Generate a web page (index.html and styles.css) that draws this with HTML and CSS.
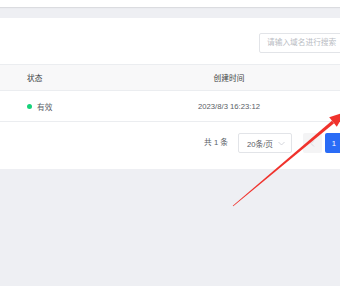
FILE: index.html
```html
<!DOCTYPE html>
<html lang="zh">
<head>
<meta charset="utf-8">
<link rel="stylesheet" href="styles.css">
</head>
<body>
<div class="topbar"></div>
<main class="main">
  <section class="card">
    <div class="toolbar">
      <div class="search">请输入域名进行搜索</div>
    </div>
    <div class="row head">
      <div class="cell status">状态</div>
      <div class="cell time">创建时间</div>
      <div class="cell rest"></div>
    </div>
    <div class="row body">
      <div class="cell status"><span class="dot"></span>有效</div>
      <div class="cell time">2023/8/3 16:23:12</div>
      <div class="cell rest"></div>
    </div>
    <div class="pager">
      <span class="total">共 1 条</span>
      <div class="size">20条/页<svg class="chev" width="7" height="5" viewBox="0 0 7 5"><path d="M0.5 1 L3.5 4 L6.5 1" fill="none" stroke="#c9ccd3" stroke-width="0.8"/></svg></div>
      <div class="btn prev"><svg width="5" height="7" viewBox="0 0 5 7"><path d="M4 0.5 L1 3.5 L4 6.5" fill="none" stroke="#d3d5da" stroke-width="0.8"/></svg></div>
      <div class="btn page">1</div>
      <div class="btn next"></div>
    </div>
  </section>
</main>
<svg class="arrow" width="340" height="286" viewBox="0 0 340 286">
  <polygon points="233.25,206.31 334.1,123.36 331.9,120.64 232.75,205.69" fill="#f0322c"/>
  <polygon points="329.2,117.3 345.5,112 336.8,126.7" fill="#f0322c"/>
</svg>
</body>
</html>
```
FILE: styles.css
```css
html, body {
  margin: 0;
  padding: 0;
  overflow: hidden;
}
body {
  width: 340px;
  height: 286px;
  background: #eeeff3;
  font-family: "Liberation Sans", "Noto Sans CJK SC", sans-serif;
  font-size: 7.7px;
  position: relative;
}
.topbar {
  height: 7px;
  background: #fff;
  box-shadow: 0 1px 1px rgba(0,0,0,0.08);
  position: relative;
}
.main {
  padding-top: 11px;
  width: 380px;
}
.card {
  background: #fff;
  width: 380px;
}
.toolbar {
  height: 46px;
  box-sizing: border-box;
  padding: 15px 15px 0 0;
  display: flex;
  justify-content: flex-end;
}
.search {
  width: 106px;
  height: 20px;
  box-sizing: border-box;
  border: 1px solid #e2e4e8;
  border-radius: 2px;
  color: #b9bcc3;
  padding-left: 7px;
  line-height: 18px;
}
.row {
  display: flex;
  border-top: 1px solid #ebedf0;
  box-sizing: border-box;
  align-items: center;
}
.row.head {
  height: 26px;
  background: #f8f8f9;
  color: #3b3e44;
}
.row.body {
  height: 32px;
  border-bottom: 1px solid #ebedf0;
  color: #5a5e66;
}
.cell.status {
  width: 160px;
  padding-left: 27px;
  box-sizing: border-box;
  display: flex;
  align-items: center;
}
.cell.time {
  width: 138px;
  text-align: center;
}
.cell.rest {
  flex: 1;
}
.dot {
  width: 5px;
  height: 5px;
  border-radius: 50%;
  background: #17d27a;
  margin-right: 5px;
}
.pager {
  height: 47px;
  box-sizing: border-box;
  padding: 11px 15px 0 0;
  display: flex;
  justify-content: flex-end;
  align-items: flex-start;
  color: #5a5e66;
}
.total {
  line-height: 20px;
  margin-right: 10px;
}
.size {
  width: 54px;
  height: 20px;
  box-sizing: border-box;
  border: 1px solid #e2e4e8;
  border-radius: 2px;
  padding: 0 6px 0 8px;
  display: flex;
  align-items: center;
  justify-content: space-between;
  color: #5a5e66;
  margin-right: 11px;
}
.btn {
  height: 20px;
  box-sizing: border-box;
  display: flex;
  align-items: center;
  justify-content: center;
  border-radius: 2px;
}
.prev {
  width: 19px;
  background: #f4f4f5;
  margin-right: 3px;
}
.page {
  width: 18px;
  background: #2a6cf6;
  color: #fff;
  margin-right: 3px;
}
.next {
  width: 19px;
  background: #f4f4f5;
}
.arrow {
  position: absolute;
  left: 0;
  top: 0;
  pointer-events: none;
}
```
